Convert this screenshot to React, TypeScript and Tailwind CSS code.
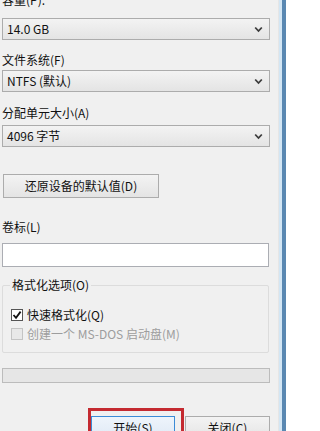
import React from "react";

const font = { fontFamily: '"Noto Sans CJK SC", "Noto Sans", sans-serif' };

function Chevron() {
  return (
    <svg width="9" height="7" viewBox="0 0 9 7" className="shrink-0">
      <path d="M1.2 1.5 L4.5 5 L7.8 1.5" fill="none" stroke="#3c3c3c" strokeWidth="1.8" />
    </svg>
  );
}

function Combo({ value }: { value: string }) {
  return (
    <div className="h-[22px] border border-[#acacac] bg-gradient-to-b from-[#f3f3f3] to-[#e4e4e4] flex items-center pl-[4px] pr-[6px]">
      <span className="flex-1 text-[12px] leading-4 text-[#111]">{value}</span>
      <Chevron />
    </div>
  );
}

export default function App() {
  return (
    <div
      className="w-[286px] h-[431px] overflow-hidden bg-[#f0f0f0] flex items-start text-[12px] text-[#111]"
      style={font}
    >
      <div className="w-[278px] shrink-0 flex flex-col pl-[2px] pr-[8px]">
        <div className="shrink-0 h-4 leading-4 mt-[-8px]">容量(P):</div>
        <div className="shrink-0 mt-[10px]">
          <Combo value="14.0 GB" />
        </div>
        <div className="shrink-0 h-4 leading-4 mt-[12px]">文件系统(F)</div>
        <div className="shrink-0 mt-[2px]">
          <Combo value="NTFS (默认)" />
        </div>
        <div className="shrink-0 h-4 leading-4 mt-[13px]">分配单元大小(A)</div>
        <div className="shrink-0 mt-[4px]">
          <Combo value="4096 字节" />
        </div>
        <div className="shrink-0 mt-[27px] ml-[1px] w-[156px] h-[24px] border border-[#acacac] bg-gradient-to-b from-[#f3f3f3] to-[#e4e4e4] flex items-center justify-center leading-4">
          还原设备的默认值(D)
        </div>
        <div className="shrink-0 h-4 leading-4 mt-[21px]">卷标(L)</div>
        <div className="shrink-0 mt-[8px] h-[24px] w-[267px] border border-[#abadb3] bg-white" />
        <div className="shrink-0 mt-[18px] w-[267px] h-[68px] border border-[#dcdcdc] rounded-[2px] flex flex-col">
          <div className="shrink-0 -mt-[9px] ml-[7px] px-[2px] w-fit bg-[#f0f0f0] leading-4 h-4">
            格式化选项(O)
          </div>
          <div className="shrink-0 mt-[14px] ml-[8px] h-4 flex items-center gap-[4px]">
            <div className="w-[12px] h-[12px] border border-[#555] bg-white flex items-center justify-center">
              <svg width="10" height="10" viewBox="0 0 10 10">
                <path d="M1.5 5 L4 7.8 L8.6 1.6" fill="none" stroke="#111" strokeWidth="1.8" />
              </svg>
            </div>
            <span className="leading-4">快速格式化(Q)</span>
          </div>
          <div className="shrink-0 mt-[3px] ml-[8px] h-4 flex items-center gap-[4px]">
            <div className="w-[12px] h-[12px] border border-[#c4c4c4] bg-[#e8e8e8]" />
            <span className="leading-4 text-[#9d9d9d]">创建一个 MS-DOS 启动盘(M)</span>
          </div>
        </div>
        <div className="shrink-0 mt-[15px] h-[15px] w-[268px] border border-[#bcbcbc] bg-[#e6e6e6]" />
        <div className="shrink-0 mt-[25px] flex items-start pl-[86px]">
          <div className="w-[96px] h-[40px] border-[3px] border-[#c42a30] pt-[5px] pr-[6px] shrink-0">
            <div className="w-[84px] h-[24px] border border-[#3c8bd6] bg-gradient-to-b from-[#eef4fb] to-[#dfe9f5] flex items-start justify-center pt-[3px] leading-4">
              开始(S)
            </div>
          </div>
          <div className="shrink-0 ml-[1px] mt-[8px] w-[85px] h-[24px] border border-[#acacac] bg-gradient-to-b from-[#f3f3f3] to-[#e4e4e4] flex items-start justify-center pt-[3px] leading-4">
            关闭(C)
          </div>
        </div>
      </div>
      <div className="w-px h-[431px] shrink-0 bg-[#e6e6e6]" />
      <div className="w-[3px] h-[431px] shrink-0 bg-[#d3e6f4]" />
      <div className="w-[4px] h-[431px] shrink-0 bg-[#5a88b2]" />
    </div>
  );
}
